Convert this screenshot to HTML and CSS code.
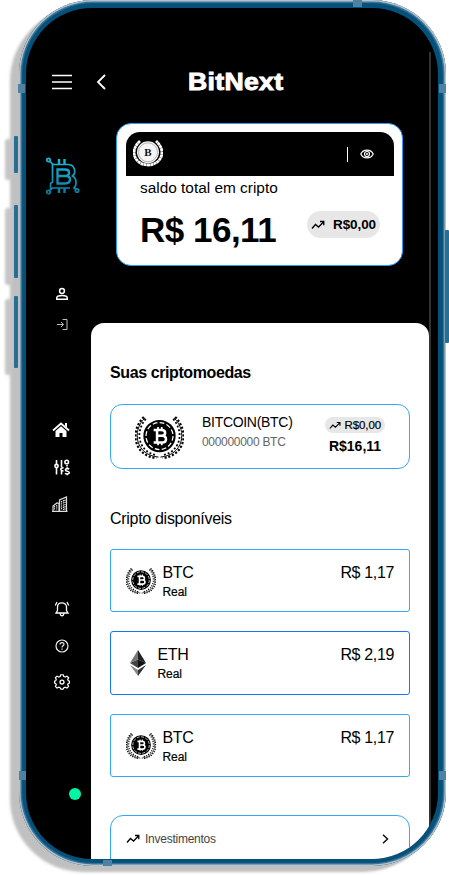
FILE: index.html
```html
<!DOCTYPE html>
<html lang="pt-BR">
<head>
<meta charset="utf-8">
<title>BitNext</title>
<link rel="stylesheet" href="styles.css">
</head>
<body>
<svg class="defs" width="0" height="0" aria-hidden="true">
  <symbol id="coin" viewBox="0 0 50 46">
    <g fill="none" stroke="currentColor">
      <path d="M10 3C-4 17 1 41 24 43M40 3C54 17 49 41 26 43" stroke-width="1"/>
      <path d="M9 2C-6 17-1 42 22 44M41 2C56 17 51 42 28 44" stroke-width="2.200" stroke-dasharray="2.200 1.800"/>
      <path d="M11 4C-1 18 4 38 22 41M39 4C51 18 46 38 28 41" stroke-width="1.800" stroke-dasharray="2 2"/>
    </g>
    <circle cx="25" cy="21.500" r="16.500" fill="currentColor"/>
    <circle cx="25" cy="21.500" r="13.800" fill="none" stroke="#fff" stroke-width="1.300" stroke-dasharray="4.800 2.400"/>
    <g fill="none" stroke="#fff" stroke-width="2.600">
      <path d="M19 15.300h8c5 0 5 6 0 6h-4.500M22.500 21.300h5c5.500 0 5.500 6.900 0 6.900H19M22.500 15v13"/>
      <path d="M23.500 12.300v3M27.300 12.300v3M23.500 28v3M27.300 28v3" stroke-width="1.800"/>
    </g>
  </symbol>
  <symbol id="trend" viewBox="0 0 14 10">
    <path d="M1 8.500l3.500-4 3 2.500L12.500 2M9 1.500h3.800v3.700" fill="none" stroke="currentColor" stroke-width="1.300"/>
  </symbol>
</svg>

<div class="phone">
  <i class="key key-mute"></i><i class="key key-up"></i><i class="key key-down"></i><i class="key key-power"></i>
  <i class="band band-top"></i><i class="band band-tl"></i><i class="band band-tr"></i><i class="band band-bl"></i><i class="band band-br"></i><i class="band band-bottom"></i>
  <div class="screen">
    <header class="topbar">
      <svg class="menu" viewBox="0 0 20 16"><path d="M0 1.500h20M0 8h20M0 14.500h20" stroke="#fff" stroke-width="1.700"/></svg>
      <svg class="back" viewBox="0 0 10 16"><path d="M9 1L2 8l7 7" fill="none" stroke="#fff" stroke-width="1.800"/></svg>
      <h1 class="brand">BitNext</h1>
    </header>
    <div class="body">
      <nav class="sidebar">
        <svg class="logo" viewBox="0 0 34 38">
          <defs><linearGradient id="lg" gradientUnits="userSpaceOnUse" x1="0" y1="0" x2="0" y2="38"><stop offset="0" stop-color="#1bbbdc"/><stop offset="1" stop-color="#087a9b"/></linearGradient></defs>
          <g fill="none" stroke="url(#lg)" stroke-width="1.700">
            <path d="M3.500 4L7 7.500h15c7 0 8.500 8.500 4.500 11.500 5 3 4 10 1.500 12l2 1.500M6.500 7v18l-2 1.500v5M3.500 33.500L6.500 31H24"/>
            <path d="M13 7V2M18.500 7V2M13 31v5M18.500 31v5" stroke-width="2.400"/>
            <path d="M11.500 12.500H19c5.500 0 5 6 1 6.500 5.500.5 5.500 7.500-1 7.500h-7.500zM11.500 19H20" stroke-width="2.300"/>
            <circle cx="2.500" cy="3" r="1.700"/><circle cx="2.500" cy="35" r="1.700"/><circle cx="31" cy="33.500" r="1.700"/>
          </g>
        </svg>
        <svg class="ico user" viewBox="0 0 20 20"><g fill="none" stroke="#fff" stroke-width="1.500"><circle cx="10" cy="7" r="2.400"/><path d="M4.800 15.200v-1.400c0-3 10.400-3 10.400 0v1.400z"/></g></svg>
        <svg class="ico exit" viewBox="0 0 20 20"><path d="M5 10.500h6.500M9 8l2.500 2.500L9 13M10.500 5.500h4.500v10h-4.500" fill="none" stroke="#bbb" stroke-width="1"/></svg>
        <svg class="ico home" viewBox="0 0 20 20"><path d="M2 10.500L10 3.500l8 7" fill="none" stroke="#fff" stroke-width="1.800"/><path d="M14 3h2v4.500l-2-1.800zM4.500 11L10 6.300l5.500 4.700v6h-4v-4h-3v4h-4z" fill="#fff"/></svg>
        <svg class="ico tune" viewBox="0 0 20 20"><g fill="none" stroke="#fff" stroke-width="1.600"><path d="M4.500 3v4M4.500 11v6.500M9.500 3v7M9.500 14v3.500M15 8v1.500"/><circle cx="4.500" cy="9" r="1.600"/><path d="M11.500 11c-3-1-4 3 0 3"/><circle cx="14.700" cy="5" r="1.800"/><path d="M17.200 12.200c-1-1-3.800-.7-3.800.7 0 1.600 3.900 1 3.900 2.700s-3.300 1.800-4.200.5"/><path d="M15.300 10.200v1.500M15.300 16.500V18.300"/></g></svg>
        <svg class="ico city" viewBox="0 0 20 20"><g fill="none" stroke="#ddd" stroke-width="1.200"><path d="M1 17.300V12l4-3 2 .5v7.800M7.500 17.300V6l7-3v14.300zM0 17.400h15.500"/><path d="M9.500 7v9M11.500 6v10M13 5.500V16M2.500 12v4M4.700 11v5" stroke-width="1.200" stroke-dasharray="1.400 .8"/></g></svg>
        <svg class="ico bell" viewBox="0 0 20 20"><g fill="none" stroke="#fff" stroke-width="1.300"><path d="M4 14h12l-1.500-2.500V8c0-5.500-9-5.500-9 0v3.500zM8 14.500c.5 3 3.500 3 4 0M5 3L3.300 6.500M15 3l1.700 3.500"/></g></svg>
        <svg class="ico help" viewBox="0 0 20 20"><g fill="none" stroke="#eee" stroke-width="1.200"><circle cx="10" cy="10" r="6"/><path d="M8 8.500c0-2.600 4-2.500 4-.2 0 1.600-2 1.500-2 3.200M10 12.500v1.200"/></g></svg>
        <svg class="ico gear" viewBox="0 0 20 20"><g fill="none" stroke="#fff" stroke-width="1.300" stroke-linejoin="round"><path transform="translate(.5 .2) scale(.95 .9)" d="M8.700 2.800h2.600l.6 2 1.500.6 1.800-1 1.800 1.800-1 1.800.6 1.500 1.200.4v2.200l-1.300.5-.5 1.400 1 1.800-1.800 1.800-1.800-1-1.500.6-.6 1.600H8.700l-.6-1.600-1.500-.6-1.800 1L3 15.800 4 14l-.6-1.400-1.200-.5V9.900l1.200-.4L4 8 3 6.200l1.800-1.800 1.800 1 1.500-.6z"/><circle cx="10" cy="10.100" r="2"/></g></svg>
        <span class="status"></span>
      </nav>
      <main class="main">
        <section class="balance">
          <div class="balance-top">
            <svg class="seal" viewBox="0 0 30 28"><path d="M7 2C-5 13 3 26 15 26S35 13 23 2" fill="none" stroke="#fff" stroke-width="2.800" stroke-dasharray="3 .3"/><circle cx="15" cy="13.300" r="11" fill="#f5f5f5"/><circle cx="15" cy="13.300" r="9.500" fill="none" stroke="#999" stroke-width=".7"/><text x="15" y="17" text-anchor="middle">B</text></svg>
            <span class="divider"></span>
            <svg class="eye" viewBox="0 0 14 10"><g fill="none" stroke="#fff" stroke-width="1.200"><path d="M.8 5C3-.2 11-.2 13.200 5 11 10.200 3 10.200.8 5z"/><circle cx="7" cy="5" r="2.500"/></g><circle cx="7" cy="5" r="1" fill="#fff"/></svg>
          </div>
          <p class="caption">saldo total em cripto</p>
          <div class="total"><strong class="amount">R$ 16,11</strong><span class="pill"><svg class="trend"><use href="#trend"/></svg>R$0,00</span></div>
        </section>
        <section class="panel">
          <h2 class="heading">Suas criptomoedas</h2>
          <article class="holding">
            <svg class="holding-coin"><use href="#coin"/></svg>
            <div class="holding-name"><span>BITCOIN(BTC)</span><small>000000000 BTC</small></div>
            <div class="holding-value"><span class="pill small"><svg class="trend"><use href="#trend"/></svg>R$0,00</span><b>R$16,11</b></div>
          </article>
          <h3 class="subheading">Cripto disponíveis</h3>
          <div class="offers">
            <article class="offer"><svg class="offer-coin"><use href="#coin"/></svg><div class="offer-name"><span>BTC</span><small>Real</small></div><span class="price">R$ 1,17</span></article>
            <article class="offer active"><svg class="eth" viewBox="0 0 16 26"><path d="M8 0L0 13l8-3.500z" fill="#777"/><path d="M8 0v9.500l8 3.500z" fill="#222"/><path d="M0 13l8-3.500V18z" fill="#444"/><path d="M8 9.500l8 3.500-8 5z" fill="#111"/><path d="M0 15l8 5v6z" fill="#888"/><path d="M16 15l-8 5v6z" fill="#333"/></svg><div class="offer-name"><span>ETH</span><small>Real</small></div><span class="price">R$ 2,19</span></article>
            <article class="offer"><svg class="offer-coin"><use href="#coin"/></svg><div class="offer-name"><span>BTC</span><small>Real</small></div><span class="price">R$ 1,17</span></article>
          </div>
          <div class="invest"><svg class="trend"><use href="#trend"/></svg><span>Investimentos</span><svg class="next" viewBox="0 0 7 10"><path d="M1 .7L5.500 5 1 9.300" fill="none" stroke="#111" stroke-width="1.500"/></svg></div>
        </section>
      </main>
      <div class="scroll"></div>
    </div>
  </div>
</div>
</body>
</html>
```

FILE: styles.css
```css
* { box-sizing: border-box; }
body { margin: 0; width: 449px; height: 875px; overflow: hidden; background: #fff; color: #000; font-family: "Liberation Sans", Arial, sans-serif; }
h1, h2, h3, p { margin: 0; }
svg { display: block; flex: none; }
.defs { position: absolute; }

.phone {
  position: relative; width: 427px; height: 866px; margin-left: 18.500px;
  padding: 8px 8px 7px 7.500px; border-radius: 74px;
  background: #04517b;
  box-shadow: inset 0 0 0 1.500px #b4c2ce, inset 0 0 1px 3px #3f7798, -10px 7px 3px -1px #c0c0c0, -5px 4px 2px 0 #c0c0c0;
}
.screen { height: 851px; overflow: hidden; border-radius: 66px; background: #000; }

.key { position: absolute; left: -4.500px; width: 4px; border-radius: 1px; background: #286d94; box-shadow: -7px 5px 3px 2px #c5c5c5; }
.key-mute { top: 136px; height: 37px; }
.key-up { top: 205px; height: 73px; }
.key-down { top: 296px; height: 72px; }
.key-power { left: 426.500px; top: 230px; height: 113px; box-shadow: none; }
.band { position: absolute; width: 7px; height: 9px; background: #4e81a2; }
.band-top { left: 334.500px; top: 0; height: 7px; width: 9px; }
.band-tl { left: -.5px; top: 84px; }
.band-tr { right: 0; top: 84px; }
.band-bl { left: 0; top: 771px; }
.band-br { right: 0; top: 771px; }
.band-bottom { left: 84.500px; bottom: 0; height: 6px; width: 9px; }

.topbar { display: flex; align-items: center; height: 115px; padding: 33px 0 0 26px; }
.menu { width: 20px; height: 16px; }
.back { width: 10px; height: 16px; margin-left: 24px; }
.brand { margin-left: 82px; color: #fff; font: bold 23px/30px "Liberation Sans", Arial, sans-serif; letter-spacing: .3px; transform: scaleX(1.155); transform-origin: left; -webkit-text-stroke: .9px #fff; }

.body { display: grid; grid-template-columns: 65px 338px 2px; height: 736px; }
.sidebar { display: flex; flex-direction: column; align-items: flex-start; }
.logo { width: 34px; height: 38px; margin: 34px 0 0 20px; }
.ico { width: 20px; height: 20px; margin-left: 26px; }
.user { margin-top: 89px; }
.exit { margin-top: 10px; }
.home { margin-top: 86px; margin-left: 25px; }
.tune { margin-top: 17px; }
.city { margin-top: 17px; }
.bell { margin-top: 85px; }
.help { margin-top: 17px; }
.gear { margin-top: 16px; }
.status { width: 12px; height: 12px; margin: 96px 0 0 43px; border-radius: 50%; background: #00f5a5; }
.scroll { margin-top: -71px; background: #333; }

.balance { width: 287px; height: 143px; margin-left: 25px; padding: 8px 8px 8px 9px; border: 1px solid #259dff; border-radius: 15px; background: #fff; }
.balance-top { display: flex; align-items: center; height: 44px; padding: 0 20px 3px 7px; border-radius: 14px 14px 0 0; background: #000; }
.seal { width: 30px; height: 28px; }
.seal text { font: bold 11px "Liberation Serif", serif; fill: #111; }
.divider { width: 1px; height: 15px; margin: 3px 12px 0 auto; background: #fff; }
.eye { width: 14px; height: 10px; margin-top: 3px; }
.caption { padding: 3px 0 0 14px; font-size: 15.400px; line-height: 18px; }
.total { display: flex; align-items: center; justify-content: space-between; height: 42px; margin-top: 12px; padding: 0 14px; }
.amount { font-size: 35px; line-height: 42px; letter-spacing: -.5px; white-space: nowrap; }
.pill { display: flex; align-items: center; justify-content: space-between; width: 73px; height: 27px; margin-bottom: 11px; padding: 0 4px 0 4px; border-radius: 14px; background: #e7e7e7; font-size: 13.500px; font-weight: bold; letter-spacing: -.1px; }
.trend { width: 14px; height: 10px; }
.pill.small { width: 60px; height: 16px; margin: 0; padding: 0 4px; font-size: 11.500px; font-weight: normal; -webkit-text-stroke: .2px #000; }
.small .trend { width: 12px; height: 9px; }

.panel { height: 536px; margin-top: 57px; padding: 39px 19px 0; overflow: hidden; border-radius: 13px 13px 0 0; background: #fff; }
.main { min-width: 0; height: 736px; }
.heading { font-size: 16px; line-height: 22px; letter-spacing: -.4px; }
.holding { display: flex; height: 65px; margin-top: 20px; padding: 10px 24px 0 24px; border: 1px solid #32a8f8; border-radius: 12px; }
.holding-coin { width: 49px; height: 45px; }
.holding-name { display: flex; flex-direction: column; margin: -1px 0 0 18px; font-size: 14px; line-height: 16px; letter-spacing: -.3px; }
.holding-name small { margin-top: 5px; color: #666; font-size: 12px; line-height: 14px; }
.holding-value { display: flex; flex-direction: column; align-items: center; margin: 2px 0 0 auto; font-size: 14px; }
.holding-value b { margin-top: 5px; line-height: 16px; }
.subheading { margin-top: 40px; font-size: 16px; font-weight: normal; line-height: 20px; letter-spacing: -.3px; }
.offers { display: grid; gap: 19px; margin-top: 20px; }
.offer { display: flex; height: 63.300px; padding: 13px 15px 0; border: 1px solid #32a8f8; border-radius: 3px; }
.offer.active { border-color: #1677f2; }
.offer-coin { width: 30px; height: 28px; margin-top: 4px; }
.offer-name { display: flex; flex-direction: column; margin-left: 6.500px; font-size: 16px; line-height: 20px; letter-spacing: -.4px; }
.offer-name small { margin-top: 2px; font-size: 12px; line-height: 14px; letter-spacing: -.1px; -webkit-text-stroke: .2px #000; }
.eth { width: 16px; height: 26px; margin: 5px 0 0 4px; }
.eth + .offer-name { margin-left: 11.500px; }
.price { margin-left: auto; font-size: 16px; line-height: 20px; letter-spacing: -.35px; }
.invest { display: flex; align-items: center; height: 65px; margin-top: 38px; padding: 0 20px 17px 15px; border: 1px solid #32a8f8; border-radius: 13px; color: #444; font-size: 12px; letter-spacing: -.25px; }
.invest .trend { margin-right: 5px; color: #000; }
.next { width: 7px; height: 10px; margin-left: auto; }
```
